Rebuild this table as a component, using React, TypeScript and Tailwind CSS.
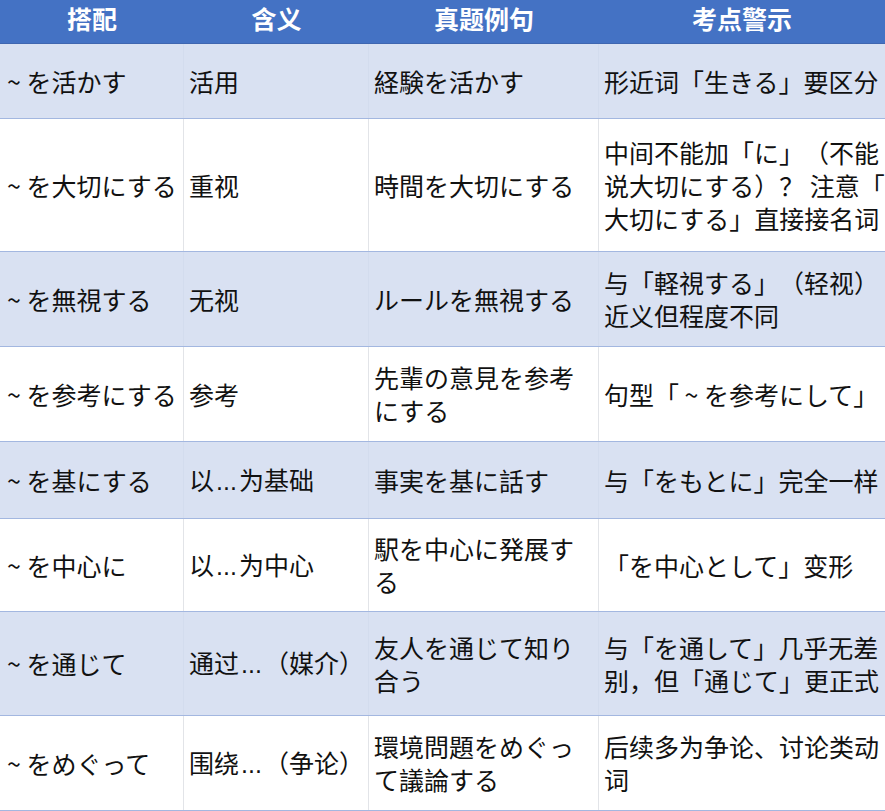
import React from "react";

type Row = { h: string; c: React.ReactNode[]; blue: boolean };

const L = ({ lines }: { lines: React.ReactNode[] }) => (
  <div>
    {lines.map((l, i) => (
      <div key={i} className="whitespace-nowrap">
        {l}
      </div>
    ))}
  </div>
);

const E = () => (
  <span className="inline-block w-[25px] text-center" style={{ fontFamily: '"Liberation Sans", sans-serif' }}>
    ...
  </span>
);

const rows: Row[] = [
  { h: "h-[75px]", blue: true, c: ["~ を活かす", "活用", "経験を活かす", "形近词「生きる」要区分"] },
  {
    h: "h-[133px]",
    blue: false,
    c: [
      "~ を大切にする",
      "重视",
      "時間を大切にする",
      <L lines={["中间不能加「に」（不能", "说大切にする）？ 注意「", "大切にする」直接接名词"]} />,
    ],
  },
  {
    h: "h-[95px]",
    blue: true,
    c: ["~ を無視する", "无视", "ルールを無視する", <L lines={["与「軽視する」（轻视）", "近义但程度不同"]} />],
  },
  {
    h: "h-[95px]",
    blue: false,
    c: ["~ を参考にする", "参考", <L lines={["先輩の意見を参考", "にする"]} />, "句型「 ~ を参考にして」"],
  },
  {
    h: "h-[77px]",
    blue: true,
    c: ["~ を基にする", <span>以<E />为基础</span>, "事実を基に話す", "与「をもとに」完全一样"],
  },
  {
    h: "h-[93px]",
    blue: false,
    c: ["~ を中心に", <span>以<E />为中心</span>, <L lines={["駅を中心に発展す", "る"]} />, "「を中心として」变形"],
  },
  {
    h: "h-[104px]",
    blue: true,
    c: [
      "~ を通じて",
      <span>通过<E />（媒介）</span>,
      <L lines={["友人を通じて知り", "合う"]} />,
      <L lines={["与「を通して」几乎无差", "别，但「通じて」更正式"]} />,
    ],
  },
  {
    h: "h-[95px]",
    blue: false,
    c: [
      "~ をめぐって",
      <span>围绕<E />（争论）</span>,
      <L lines={["環境問題をめぐっ", "て議論する"]} />,
      <L lines={["后续多为争论、讨论类动", "词"]} />,
    ],
  },
];

const cols = "grid grid-cols-[184px_185px_230px_286px]";

export default function App() {
  return (
    <div
      className="w-[885px] h-[811px] overflow-hidden bg-white text-[#111] [text-spacing-trim:space-all]"
      style={{ fontFamily: '"Noto Sans CJK SC", "Noto Sans", sans-serif' }}
    >
      <div className={`${cols} h-[44px] bg-[#4472c4] text-white font-bold text-[25px] border-b border-[#3f66b0]`}>
        {["搭配", "含义", "真题例句", "考点警示"].map((t) => (
          <div key={t} className="flex items-center justify-center pb-[5px]">
            {t}
          </div>
        ))}
      </div>
      {rows.map((r, i) => (
        <div
          key={i}
          className={`${cols} ${r.h} ${r.blue ? "bg-[#d9e1f2]" : "bg-white"} border-b-[1.5px] border-[#a3b7e0] text-[25px] leading-[33px]`}
        >
          {r.c.map((c, j) => (
            <div
              key={j}
              className={`flex items-center ${j === 0 ? "pl-[7px]" : "pl-[5px]"} ${
                j < 3 ? (r.blue ? "border-r border-[#d3dcee]" : "border-r border-[#e2e4e8]") : ""
              }`}
            >
              {c}
            </div>
          ))}
        </div>
      ))}
    </div>
  );
}
